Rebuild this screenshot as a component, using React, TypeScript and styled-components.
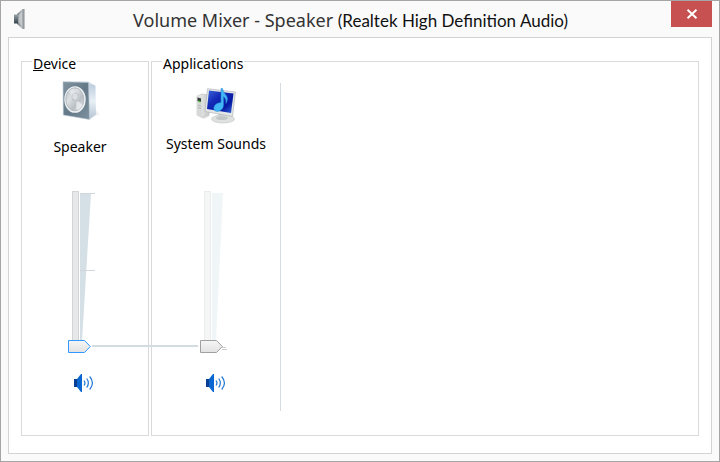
import React, { useId, useState } from "react";
import styled, { createGlobalStyle, css } from "styled-components";

const GlobalStyle = createGlobalStyle`
  *, *::before, *::after { box-sizing: border-box; }
  body {
    margin: 0;
    background: #fafafa;
    color: #000;
    font: 14px/20px "Noto Sans", "Open Sans", sans-serif;
  }
`;

const Window = styled.main`
  display: flex;
  flex-direction: column;
  min-height: 100vh;
  padding: 0 7px 7px;
  border: 1px solid #a5a5a5;
  background: #fafafa;
`;

const TitleBar = styled.header`
  display: flex;
  height: 36px;
`;

const WindowIcon = styled.svg`
  flex: none;
  width: 22px;
  height: 22px;
  margin-top: 7px;
`;

const Title = styled.h1`
  flex: 1;
  margin: 0;
  padding-top: 6px;
  color: #333;
  font-size: 18px;
  line-height: 26px;
  font-weight: 400;
  text-align: center;
  white-space: nowrap;
`;

const DeviceName = styled.span`
  color: #111;
  font-family: Lato, sans-serif;
  font-size: 17px;
`;

const CloseButton = styled.button`
  display: grid;
  place-items: center;
  flex: none;
  width: 41px;
  height: 26px;
  padding: 0;
  border: 0;
  background: #c75050;
`;

const Panel = styled.section`
  display: flex;
  flex: 1;
  gap: 2px;
  padding: 11px 12px 17px;
  border: 1px solid #d3d3d3;
  background: #fff;
`;

const Group = styled.fieldset<{ $grow?: boolean }>`
  flex: ${(p) => (p.$grow ? "1" : "0 0 128px")};
  min-width: 0;
  margin: 0;
  padding: 0;
  border: 1px solid #dadada;
`;

const Legend = styled.legend`
  margin-left: 10px;
  padding: 5px 1px 0;
`;

const Channel = styled.div<{ $divided?: boolean }>`
  display: flex;
  flex-direction: column;
  align-items: center;
  ${(p) =>
    p.$divided
      ? css`
          width: 129px;
          margin-top: 9px;
          padding: 5px 0 18px;
          border-right: 1px solid #d5dce0;
        `
      : css`
          width: 116px;
          padding-top: 7px;
        `}
`;

const ChannelLabel = styled.label<{ $divided?: boolean }>`
  margin: ${(p) => (p.$divided ? "10px 0 37px" : "16px 0 34px")};
  white-space: nowrap;
`;

const Controls = styled.div<{ $divided?: boolean }>`
  align-self: flex-start;
  margin-left: ${(p) => (p.$divided ? "48px" : "46px")};
`;

const SliderBox = styled.div`
  position: relative;
  display: grid;
  width: 24px;
  height: 162px;
  > * { grid-area: 1 / 1; }
`;

const Scale = styled.svg`
  width: 28px;
  height: 162px;
`;

const thumb = (stroke: string) =>
  `url("data:image/svg+xml,${encodeURIComponent(
    `<svg xmlns="http://www.w3.org/2000/svg" width="23" height="13"><defs><linearGradient id="g" x2="0" y2="1"><stop stop-color="#f6f6f6"/><stop offset="1" stop-color="#e2e2e2"/></linearGradient></defs><path d="M.5 .5H16.5L22.3 6.5L16.5 12.5H.5Z" fill="url(#g)" stroke="${stroke}"/></svg>`
  )}")`;

const Slider = styled.input<{ $muted?: boolean }>`
  appearance: none;
  writing-mode: vertical-lr;
  direction: rtl;
  position: relative;
  width: 23px;
  height: 162px;
  margin: 0;
  background: linear-gradient(
      ${(p) => (p.$muted ? "#f5f6f6, #f5f6f6" : "#e6e8e9, #e6e8e9")}
    ) 5px 1px / 5px 154px no-repeat,
    linear-gradient(
      ${(p) => (p.$muted ? "#ebeded, #ebeded" : "#d2d4d5, #d2d4d5")}
    ) 4px 0 / 7px 156px no-repeat;
  &::-webkit-slider-runnable-track {
    width: 23px;
    height: 162px;
    background: transparent;
  }
  &::-webkit-slider-thumb {
    appearance: none;
    width: 23px;
    height: 13px;
    border: 0;
    background: ${(p) => thumb(p.$muted ? "#a0a0a0" : "#3399ff")} no-repeat;
  }
`;

const LinkLine = styled.span`
  position: absolute;
  z-index: 1;
  left: 24px;
  bottom: 6px;
  width: 106px;
  height: 2px;
  background: #d3dce1;
`;

const MuteButton = styled.button`
  display: block;
  width: 20px;
  height: 20px;
  margin: 20px 0 0 6px;
  padding: 0;
  border: 0;
  background: none;
`;

const SmallSpeakerIcon = () => (
  <WindowIcon viewBox="0 0 22 22" aria-hidden="true">
    <defs>
      <linearGradient id="tb-cone" x2="1">
        <stop stopColor="#747b80" />
        <stop offset=".6" stopColor="#b4babd" />
        <stop offset="1" stopColor="#858b90" />
      </linearGradient>
      <linearGradient id="tb-back" x2="0" y2="1">
        <stop stopColor="#98a2a8" />
        <stop offset="1" stopColor="#34434d" />
      </linearGradient>
    </defs>
    <path d="M9 6L14.500 1H16.500V21H14.500L9 16Z" fill="url(#tb-cone)" />
    <path d="M6 6.500H10V15.500H6Z" fill="url(#tb-back)" />
    <path d="M10.500 7L14 4V18L10.500 14Z" fill="#d5d9db" opacity=".6" />
  </WindowIcon>
);

const SpeakerIcon = () => (
  <svg width="40" height="40" viewBox="0 0 40 40" aria-hidden="true">
    <defs>
      <linearGradient id="sp-front" x2="1" y2="1">
        <stop stopColor="#8294a0" />
        <stop offset=".5" stopColor="#647988" />
        <stop offset="1" stopColor="#7d919e" />
      </linearGradient>
      <linearGradient id="sp-side" x2="0" y2="1">
        <stop stopColor="#b9cbdc" />
        <stop offset=".5" stopColor="#e8eff6" />
        <stop offset="1" stopColor="#b3c3d2" />
      </linearGradient>
      <linearGradient id="sp-cone" x2="1" y2="1">
        <stop stopColor="#b4bac0" />
        <stop offset=".35" stopColor="#dde1e4" />
        <stop offset=".65" stopColor="#b9bfc4" />
        <stop offset="1" stopColor="#eceef0" />
      </linearGradient>
    </defs>
    <path d="M30 37L39.500 33.500L36 29Z" fill="#f0f0f0" />
    <path d="M28 2L35.500 4.500L36 33.500L29.500 38.500Z" fill="url(#sp-side)" />
    <path d="M4 .5L28 .5L35.500 4.500L28 3Z" fill="#d2dee9" />
    <path d="M3 .8L28.500 1.500L29.500 38.500L3.300 34Z" fill="url(#sp-front)" stroke="#bac7d1" strokeWidth=".6" />
    <ellipse cx="15" cy="18.500" rx="10.700" ry="13.300" fill="#eef1f3" />
    <ellipse cx="14.800" cy="18.300" rx="9" ry="11.500" fill="url(#sp-cone)" stroke="#aab1b7" strokeWidth=".8" />
    <path d="M15 17L8.500 10.500Q11 7.500 14 7.200Z" fill="#f4f6f7" opacity=".45" />
    <path d="M16 18L22.500 24Q20 28.500 16.500 29Z" fill="#f8f9fa" opacity=".6" />
    <ellipse cx="15.500" cy="16.500" rx="4" ry="4.800" fill="#c3c8cd" />
    <ellipse cx="15" cy="15.500" rx="2.500" ry="3" fill="#dde0e3" />
  </svg>
);

const ComputerIcon = () => (
  <svg width="40" height="36" viewBox="0 0 40 36" aria-hidden="true">
    <defs>
      <linearGradient id="pc-screen" x2="1" y2="1">
        <stop stopColor="#3a65d8" />
        <stop offset=".35" stopColor="#142bb8" />
        <stop offset=".7" stopColor="#0719a1" />
        <stop offset="1" stopColor="#3168dc" />
      </linearGradient>
      <linearGradient id="pc-case" x2="1">
        <stop stopColor="#f4f4f4" />
        <stop offset="1" stopColor="#bfc3c3" />
      </linearGradient>
    </defs>
    <path d="M1 27L8 31L14 28L9 25Z" fill="#e5e5e5" />
    <path d="M1 8L6 6L14 7L13 27L6 29.500L1 27Z" fill="url(#pc-case)" stroke="#bebebe" strokeWidth=".6" />
    <path d="M1 8L5.500 9.500L6 29.500L1 27Z" fill="#d7d9d9" />
    <path d="M1.500 9.500L5 10.500V14L1.500 13Z" fill="#343b38" />
    <path d="M2.500 12.500L4.500 13V14.500L2.500 14Z" fill="#4cc82f" />
    <path d="M2 17L5 18M2 19.500L5 20.500" stroke="#b1b4b4" />
    <path d="M22 25L30 26L29.500 31H24Z" fill="#bdc0c1" />
    <ellipse cx="27" cy="31" rx="11.500" ry="4" fill="#dfe1e1" stroke="#c0c2c2" strokeWidth=".6" />
    <ellipse cx="26" cy="30" rx="6" ry="2" fill="#c3c6c7" />
    <path d="M11.500 .7L39.500 4L36.500 28.500L9 23.500Z" fill="#e3e5e6" stroke="#b5b9bc" strokeWidth=".7" />
    <path d="M13 2.500L37.500 5.500L35 25L11 21Z" fill="url(#pc-screen)" />
    <path d="M25 14.500V.5H26.500Q27 4 29.500 6.500Q33 10.500 30 15.500Q30.500 10.500 27.500 8.500V17.500Q27 22 22 23.500Q17.500 23.500 17.800 19.500Q19 15 25 14.500Z" fill="#43b7f5" stroke="#2384d4" strokeWidth=".5" />
  </svg>
);

const SoundIcon = () => (
  <svg width="20" height="20" viewBox="0 0 20 20" aria-hidden="true">
    <path d="M0 6H3.500V14H0Z" fill="#083f93" />
    <path d="M3 6L7 1H8V19H7L3 14Z" fill="#0a66d0" />
    <g fill="none" stroke="#2079d5" strokeWidth="1.200">
      <path d="M10 7.500Q12 10 10 12.500" />
      <path d="M12.700 5.500Q16 10 12.700 14.500" />
      <path d="M15.700 3.500Q21.200 10 15.700 16.500" />
    </g>
  </svg>
);

type MixerChannelProps = {
  name: string;
  icon: React.ReactNode;
  application?: boolean;
};

function MixerChannel({ name, icon, application }: MixerChannelProps) {
  const id = useId();
  const [level, setLevel] = useState(0);
  return (
    <Channel $divided={application}>
      {icon}
      <ChannelLabel htmlFor={id} $divided={application}>{name}</ChannelLabel>
      <Controls $divided={application}>
        <SliderBox>
          <Scale viewBox="0 0 28 162" aria-hidden="true">
            <path d={application ? "M12 2H23L16 150H12Z" : "M12 2H23L14 150H12Z"} fill={application ? "#f0f5f7" : "#d5dfe6"} />
            {application ? (
              <path d="M22 156.500H26M22 158.500H27" stroke="#ccc" />
            ) : (
              <path d="M12 2.500H27M12 79.500H27" stroke="#d0d6da" />
            )}
          </Scale>
          <Slider
            id={id}
            type="range"
            min={0}
            max={100}
            value={level}
            $muted={application}
            onChange={(e) => setLevel(Number(e.target.value))}
          />
          {!application && <LinkLine />}
        </SliderBox>
        <MuteButton type="button" aria-label={`Mute ${name}`}>
          <SoundIcon />
        </MuteButton>
      </Controls>
    </Channel>
  );
}

export default function App() {
  return (
    <>
      <GlobalStyle />
      <Window>
        <TitleBar>
          <SmallSpeakerIcon />
          <Title>
            Volume Mixer - Speaker <DeviceName>(Realtek High Definition Audio)</DeviceName>
          </Title>
          <CloseButton type="button" aria-label="Close">
            <svg width="12" height="10" viewBox="0 0 12 10" aria-hidden="true">
              <path d="M1.500 .8L10.500 9.200M10.500 .8L1.500 9.200" stroke="#fff" strokeWidth="2" />
            </svg>
          </CloseButton>
        </TitleBar>
        <Panel>
          <Group>
            <Legend><u>D</u>evice</Legend>
            <MixerChannel name="Speaker" icon={<SpeakerIcon />} />
          </Group>
          <Group $grow>
            <Legend>Applications</Legend>
            <MixerChannel name="System Sounds" icon={<ComputerIcon />} application />
          </Group>
        </Panel>
      </Window>
    </>
  );
}
